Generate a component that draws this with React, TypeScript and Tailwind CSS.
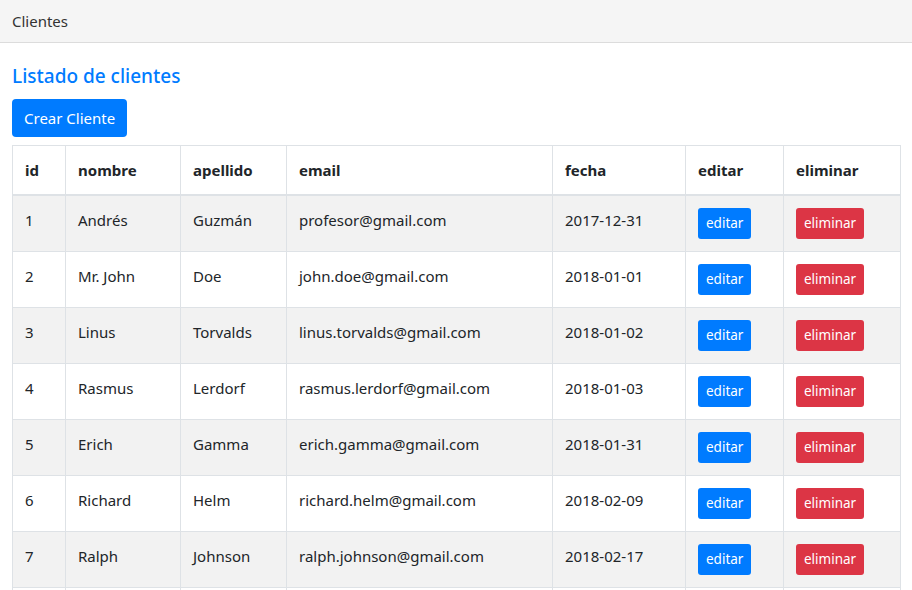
import React from "react";

type Cliente = { id: number; nombre: string; apellido: string; email: string; fecha: string };

const clientes: Cliente[] = [
  { id: 1, nombre: "Andrés", apellido: "Guzmán", email: "profesor@gmail.com", fecha: "2017-12-31" },
  { id: 2, nombre: "Mr. John", apellido: "Doe", email: "john.doe@gmail.com", fecha: "2018-01-01" },
  { id: 3, nombre: "Linus", apellido: "Torvalds", email: "linus.torvalds@gmail.com", fecha: "2018-01-02" },
  { id: 4, nombre: "Rasmus", apellido: "Lerdorf", email: "rasmus.lerdorf@gmail.com", fecha: "2018-01-03" },
  { id: 5, nombre: "Erich", apellido: "Gamma", email: "erich.gamma@gmail.com", fecha: "2018-01-31" },
  { id: 6, nombre: "Richard", apellido: "Helm", email: "richard.helm@gmail.com", fecha: "2018-02-09" },
  { id: 7, nombre: "Ralph", apellido: "Johnson", email: "ralph.johnson@gmail.com", fecha: "2018-02-17" },
  { id: 8, nombre: "John", apellido: "Vlissides", email: "john.vlissides@gmail.com", fecha: "2018-02-28" },
];

export default function App() {
  return (
    <div className="min-h-screen bg-white text-[#212529] font-['Noto_Sans',sans-serif] text-[15px] leading-6">
      {/* navbar */}
      <div className="h-[43px] bg-[#f5f5f5] border-b border-[#dcdcdc] px-3 flex items-center">
        <span className="text-[15px] text-[#333]">Clientes</span>
      </div>
      <div className="px-3">
        <h4 className="mt-[21px] mb-[11px] text-[19px] leading-6 font-medium text-[#007bff]">Listado de clientes</h4>
        <button className="h-[38px] px-3 rounded bg-[#007bff] text-white text-[15px]">Crear Cliente</button>
        <table className="mt-2 w-[888px] border-collapse table-fixed">
          <colgroup>
            <col className="w-[53px]" />
            <col className="w-[115px]" />
            <col className="w-[106px]" />
            <col className="w-[266px]" />
            <col className="w-[133px]" />
            <col className="w-[98px]" />
            <col className="w-[117px]" />
          </colgroup>
          <thead>
            <tr>
              {["id", "nombre", "apellido", "email", "fecha", "editar", "eliminar"].map((h) => (
                <th key={h} className="border border-[#dee2e6] border-b-2 p-3 text-left font-bold align-bottom">
                  {h}
                </th>
              ))}
            </tr>
          </thead>
          <tbody>
            {clientes.map((c, i) => (
              <tr key={c.id} className={i % 2 === 0 ? "bg-[#f2f2f2]" : "bg-white"}>
                <td className="border border-[#dee2e6] p-3 align-top">{c.id}</td>
                <td className="border border-[#dee2e6] p-3 align-top">{c.nombre}</td>
                <td className="border border-[#dee2e6] p-3 align-top">{c.apellido}</td>
                <td className="border border-[#dee2e6] p-3 align-top">{c.email}</td>
                <td className="border border-[#dee2e6] p-3 align-top">{c.fecha}</td>
                <td className="border border-[#dee2e6] p-3 align-top">
                  <button className="h-[31px] px-2 rounded-[3px] bg-[#007bff] text-white text-[13.5px] leading-[21px]">editar</button>
                </td>
                <td className="border border-[#dee2e6] p-3 align-top">
                  <button className="h-[31px] px-2 rounded-[3px] bg-[#dc3545] text-white text-[13.5px] leading-[21px]">eliminar</button>
                </td>
              </tr>
            ))}
          </tbody>
        </table>
      </div>
    </div>
  );
}
